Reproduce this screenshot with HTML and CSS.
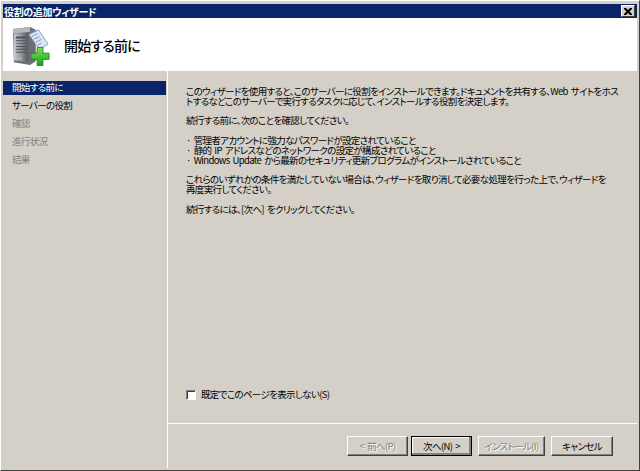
FILE: index.html
```html
<!DOCTYPE html>
<html lang="ja">
<head>
<meta charset="utf-8">
<title>役割の追加ウィザード</title>
<link rel="stylesheet" href="styles.css">
</head>
<body>
<div class="window">
  <div class="titlebar">
    <span class="title-text">役割の追加ウィザード</span>
    <span class="close-btn">
      <svg width="8" height="7" viewBox="0 0 8 7"><path d="M0 0h2l2 2 2-2h2v1L5.500 3.500 8 6v1H6L4 5 2 7H0V6l2.500-2.500L0 1z" fill="#000"/></svg>
    </span>
  </div>
  <header class="header">
    <svg class="header-icon" width="38" height="40" viewBox="0 0 40 42">
      <defs>
        <linearGradient id="srv" x1="0" x2="1" y1="0" y2="0"><stop offset="0" stop-color="#c9ccd0"/><stop offset=".55" stop-color="#8d9196"/><stop offset="1" stop-color="#55585c"/></linearGradient>
        <linearGradient id="plus" x1="0" x2="0" y1="0" y2="1"><stop offset="0" stop-color="#7fe05a"/><stop offset="1" stop-color="#12a51c"/></linearGradient>
      </defs>
      <path d="M1 3l18-2 6 3v33l-6 4-17-3z" fill="#6b6e72"/>
      <path d="M1 3l18-2v5L1 8z" fill="#b4b8bd"/>
      <path d="M2 8l15-1v31L2 36z" fill="url(#srv)"/>
      <path d="M4 11h11v2H4zM4 15h11v1H4zM4 18h11v1H4zM4 21h11v1H4zM4 24h11v1H4zM4 27h11v1H4z" fill="#4d5054"/>
      <rect x="8" y="33" width="2" height="2" fill="#9be05a"/>
      <path d="M18 9l10-5 10 15-9 6z" fill="#d9e6f5" stroke="#8aa3c4" stroke-width="1"/>
      <path d="M21 11l6-3M23 14l6-3M25 17l6-3M27 20l4-2" stroke="#7c93b3" stroke-width="1"/>
      <path d="M20 7c1-3 4-3 5-1" fill="none" stroke="#7d8ca3"/>
      <path d="M26.500 22.500h6v6h6.500v6.500h-6.500v6.500h-6v-6.500H20v-6.500h6.500z" fill="url(#plus)" stroke="#1d8a22" stroke-width="1"/>
    </svg>
    <h1 class="header-title">開始する前に</h1>
  </header>
  <div class="main">
    <nav class="sidebar">
      <div class="step step-active">開始する前に</div>
      <div class="step">サーバーの役割</div>
      <div class="step step-off">確認</div>
      <div class="step step-off">進行状況</div>
      <div class="step step-off">結果</div>
    </nav>
    <section class="content">
      <div class="body">
        <div class="copy">
          <p>このウィザードを使用すると、このサーバーに役割をインストールできます。ドキュメントを共有する、Web サイトをホス<br>トするなどこのサーバーで実行するタスクに応じて、インストールする役割を決定します。</p>
          <p>続行する前に、次のことを確認してください。</p>
          <p>· 管理者アカウントに強力なパスワードが設定されていること<br>· 静的 IP アドレスなどのネットワークの設定が構成されていること<br>· Windows Update から最新のセキュリティ更新プログラムがインストールされていること</p>
          <p>これらのいずれかの条件を満たしていない場合は、ウィザードを取り消して必要な処理を行った上で、ウィザードを<br>再度実行してください。</p>
          <p>続行するには、[次へ] をクリックしてください。</p>
        </div>
        <label class="check-row"><span class="checkbox"></span>既定でこのページを表示しない(S)</label>
      </div>
      <footer class="footer">
        <span class="btn btn-disabled btn-prev">&lt; 前へ(P)</span>
        <span class="btn btn-default">次へ(N) &gt;</span>
        <span class="btn btn-disabled btn-install">インストール(I)</span>
        <span class="btn btn-cancel">キャンセル</span>
      </footer>
    </section>
  </div>
</div>
</body>
</html>
```
FILE: styles.css
```css
* { box-sizing: border-box; }
html, body { margin: 0; height: 100%; }
body {
  width: 640px;
  height: 471px;
  overflow: hidden;
  background: #d4d0c8;
  font-family: "Noto Sans CJK JP", "Liberation Sans", sans-serif;
  font-size: 9.500px;
  letter-spacing: -0.650px;
  word-spacing: 1.500px;
  font-feature-settings: "palt";
  color: #000;
}
.window {
  width: 640px;
  height: 471px;
  display: flex;
  flex-direction: column;
  background: #d4d0c8;
  padding: 3px 2px 2px 2px;
  border-top: 1px solid #fff;
  border-left: 1px solid #fff;
  border-right: 1px solid #404040;
  border-bottom: 1px solid #404040;
}
.titlebar {
  height: 14px;
  flex: none;
  background: #0a246a;
  color: #fff;
  display: flex;
  align-items: center;
  justify-content: space-between;
  padding: 0 2px 0 1px;
  font-size: 10px;
  letter-spacing: -0.350px;
  font-weight: 700;
  line-height: 13px;
}
.close-btn {
  width: 14px;
  height: 12px;
  background: #d4d0c8;
  border: 1px solid;
  border-color: #fff #404040 #404040 #fff;
  display: flex;
  align-items: center;
  justify-content: center;
}
.header {
  height: 53px;
  flex: none;
  background: #fff;
  display: flex;
  align-items: center;
  padding: 0 0 0 9px;
  gap: 14px;
}
.header-icon { margin-top: 2px; }
.header-title {
  margin: 0;
  font-size: 14px;
  letter-spacing: -0.800px;
  font-weight: 500;
  line-height: 16px;
}
.main {
  flex: 1;
  min-height: 0;
  display: flex;
  margin: 0;
}
.sidebar {
  width: 165px;
  flex: none;
  padding-top: 10px;
  border-right: 1px solid #fff;
}
.step {
  height: 18px;
  line-height: 13px;
  padding-left: 9px;
}
.step-active {
  height: 14px;
  margin-right: 1px;
  margin-bottom: 4px;
  background: #0a246a;
  color: #fff;
}
.step-off { color: #808080; }
.content {
  flex: 1;
  min-width: 0;
  display: flex;
  flex-direction: column;
}
.body {
  flex: 1;
  min-height: 0;
  display: flex;
  flex-direction: column;
  justify-content: space-between;
  padding: 16px 20px 22px 18px;
}
.copy p {
  margin: 0 0 9.830px;
  line-height: 9.830px;
  white-space: nowrap;
}
.check-row {
  display: flex;
  align-items: center;
  gap: 5px;
  line-height: 13px;
}
.checkbox {
  width: 10px;
  height: 10px;
  background: #fff;
  border: 1px solid;
  border-color: #808080 #fff #fff #808080;
  box-shadow: inset 1px 1px 0 #404040;
}
.footer {
  height: 45px;
  flex: none;
  border-top: 1px solid #fff;
  display: flex;
  align-items: flex-start;
  justify-content: flex-end;
  padding: 12px 24px 0 0;
}
.btn {
  width: 61px;
  height: 20px;
  background: #d4d0c8;
  border: 1px solid;
  border-color: #fff #404040 #404040 #fff;
  box-shadow: inset -1px -1px 0 #808080;
  display: flex;
  align-items: center;
  justify-content: center;
  line-height: 13px;
  white-space: nowrap;
}
.btn-prev { width: 61px; margin-right: 3px; }
.btn-install { width: 67px; margin: 0 6px; }
.btn-cancel { width: 62px; }
.btn-disabled {
  color: #808080;
  text-shadow: 1px 1px 0 #fff;
}
.btn-default {
  outline: 1px solid #000;
  outline-offset: -1px;
  box-shadow: inset -2px -2px 0 #808080, inset 1px 1px 0 #fff;
}
```
